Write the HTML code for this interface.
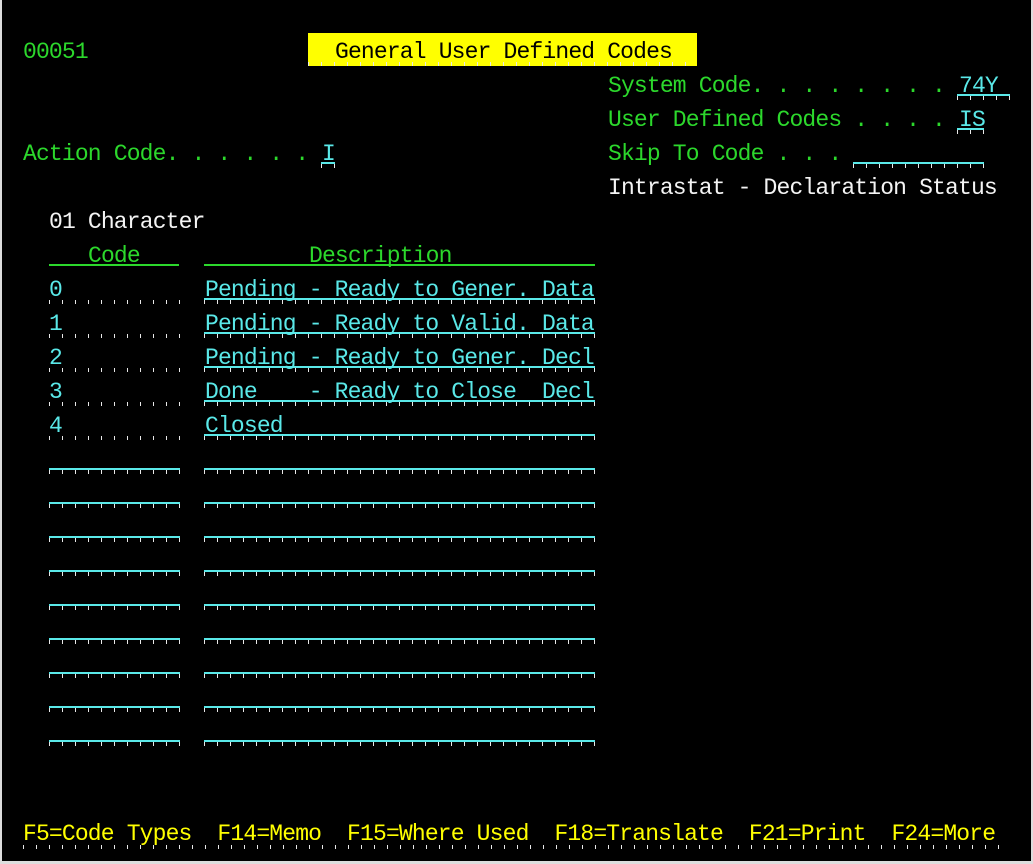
<!DOCTYPE html>
<html><head><meta charset="utf-8">
<style>
html,body{margin:0;padding:0;background:#000;width:1033px;height:864px;overflow:hidden}
body{position:relative;font-family:"Liberation Mono","DejaVu Sans Mono",monospace;font-size:23px;letter-spacing:-0.84px}
.t{position:absolute;height:34px;line-height:34px;white-space:pre}
.g{color:#2cd82c}.c{color:#5ae8e8}.w{color:#f4f4f4}.y{color:#ffff00}.k{color:#000}
.f{position:absolute;height:6px;box-sizing:border-box}
.ul{border-top:2px solid #5ae8e8}
.tk{background:repeating-linear-gradient(to right,#e8e8e8 0 1px,transparent 1px 13px)}
.gl{position:absolute;height:2px;background:#2cd82c}
</style></head><body>
<div style="position:absolute;left:308px;top:33px;width:389px;height:33px;background:#ffff00"></div>
<div class="f tk" style="left:308px;top:62px;width:390px;height:4px"></div>
<div class="t g" style="left:23px;top:35px">00051</div>
<div class="t k" style="left:335px;top:35px">General User Defined Codes</div>

<div class="t g" style="left:608px;top:69px">System Code. . . . . . . .</div>
<div class="t c" style="left:959px;top:69px">74Y</div>
<div class="f ul tk" style="left:957px;top:94px;width:53px"></div>

<div class="t g" style="left:608px;top:103px">User Defined Codes . . . .</div>
<div class="t c" style="left:959px;top:103px">IS</div>
<div class="f ul tk" style="left:957px;top:128px;width:27px"></div>

<div class="t g" style="left:23px;top:137px">Action Code. . . . . .</div>
<div class="t c" style="left:322px;top:137px">I</div>
<div class="f ul tk" style="left:321px;top:162px;width:14px"></div>
<div class="t g" style="left:608px;top:137px">Skip To Code . . .</div>
<div class="f ul tk" style="left:853px;top:162px;width:131px"></div>

<div class="t w" style="left:608px;top:171px">Intrastat - Declaration Status</div>
<div class="t w" style="left:49px;top:205px">01 Character</div>

<div class="t g" style="left:88px;top:239px">Code</div>
<div class="t g" style="left:309px;top:239px">Description</div>
<div class="gl" style="left:49px;top:264px;width:130px"></div>
<div class="gl" style="left:204px;top:264px;width:391px"></div>

<div class="t c" style="left:49px;top:273px">0</div>
<div class="t c" style="left:205px;top:273px">Pending - Ready to Gener. Data</div>
<div class="t c" style="left:49px;top:307px">1</div>
<div class="t c" style="left:205px;top:307px">Pending - Ready to Valid. Data</div>
<div class="t c" style="left:49px;top:341px">2</div>
<div class="t c" style="left:205px;top:341px">Pending - Ready to Gener. Decl</div>
<div class="t c" style="left:49px;top:375px">3</div>
<div class="t c" style="left:205px;top:375px">Done    - Ready to Close  Decl</div>
<div class="t c" style="left:49px;top:409px">4</div>
<div class="t c" style="left:205px;top:409px">Closed</div>

<div class="f tk" style="left:49px;top:300px;width:131px;height:4px"></div>
<div class="f tk" style="left:49px;top:334px;width:131px;height:4px"></div>
<div class="f tk" style="left:49px;top:368px;width:131px;height:4px"></div>
<div class="f tk" style="left:49px;top:402px;width:131px;height:4px"></div>
<div class="f tk" style="left:49px;top:436px;width:131px;height:4px"></div>
<div class="f ul tk" style="left:204px;top:298px;width:391px"></div>
<div class="f ul tk" style="left:204px;top:332px;width:391px"></div>
<div class="f ul tk" style="left:204px;top:366px;width:391px"></div>
<div class="f ul tk" style="left:204px;top:400px;width:391px"></div>
<div class="f ul tk" style="left:204px;top:434px;width:391px"></div>
<div class="f ul tk" style="left:49px;top:468px;width:131px"></div><div class="f ul tk" style="left:204px;top:468px;width:391px"></div>
<div class="f ul tk" style="left:49px;top:502px;width:131px"></div><div class="f ul tk" style="left:204px;top:502px;width:391px"></div>
<div class="f ul tk" style="left:49px;top:536px;width:131px"></div><div class="f ul tk" style="left:204px;top:536px;width:391px"></div>
<div class="f ul tk" style="left:49px;top:570px;width:131px"></div><div class="f ul tk" style="left:204px;top:570px;width:391px"></div>
<div class="f ul tk" style="left:49px;top:604px;width:131px"></div><div class="f ul tk" style="left:204px;top:604px;width:391px"></div>
<div class="f ul tk" style="left:49px;top:638px;width:131px"></div><div class="f ul tk" style="left:204px;top:638px;width:391px"></div>
<div class="f ul tk" style="left:49px;top:672px;width:131px"></div><div class="f ul tk" style="left:204px;top:672px;width:391px"></div>
<div class="f ul tk" style="left:49px;top:706px;width:131px"></div><div class="f ul tk" style="left:204px;top:706px;width:391px"></div>
<div class="f ul tk" style="left:49px;top:740px;width:131px"></div><div class="f ul tk" style="left:204px;top:740px;width:391px"></div>

<div class="t y" style="left:23px;top:817px">F5=Code Types  F14=Memo  F15=Where Used  F18=Translate  F21=Print  F24=More</div>
<div class="f tk" style="left:23px;top:845px;width:976px;height:4px"></div>

<div style="position:absolute;left:0;top:0;width:2px;height:864px;background:#ddd"></div>
<div style="position:absolute;right:0;top:0;width:2px;height:864px;background:#ddd"></div>
<div style="position:absolute;left:0;bottom:0;width:1033px;height:3px;background:#ddd"></div>
</body></html>
